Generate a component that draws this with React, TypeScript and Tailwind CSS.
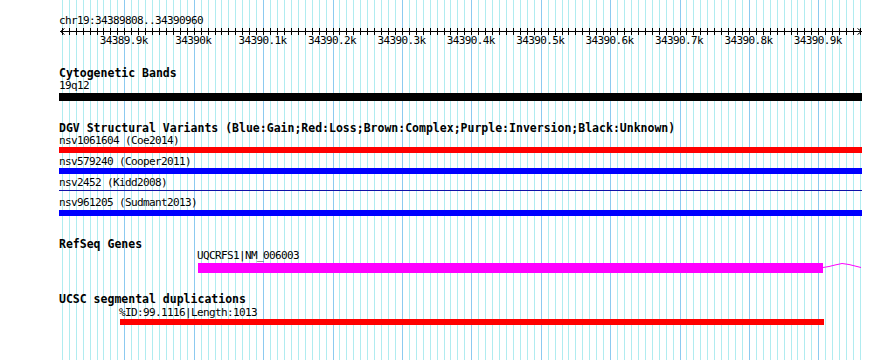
import React from "react";

const MAJOR0 = 124.3;
const MINOR = 6.94;

function gridXs() {
  const out: { x: number; major: boolean }[] = [];
  for (let k = -9; k <= 106; k++) {
    const x = Math.round(MAJOR0 + k * MINOR);
    out.push({ x, major: k % 10 === 0 });
  }
  return out;
}

const labels = [
  "34389.9k",
  "34390k",
  "34390.1k",
  "34390.2k",
  "34390.3k",
  "34390.4k",
  "34390.5k",
  "34390.6k",
  "34390.7k",
  "34390.8k",
  "34390.9k",
];

const mono = "font-['DejaVu_Sans_Mono','Liberation_Mono',monospace]";

function Grid() {
  const xs = gridXs();
  return (
    <svg
      className="absolute left-0 top-0"
      width={890}
      height={360}
      shapeRendering="crispEdges"
    >
      {xs.map((g, i) => (
        <rect
          key={i}
          x={g.x}
          y={0}
          width={1}
          height={360}
          fill={g.major ? "#8ccaf0" : "#b0ecf0"}
        />
      ))}
    </svg>
  );
}

function Ruler() {
  const xs = gridXs();
  const off = 59;
  return (
    <svg width={805} height={18} className="mt-[2px] block overflow-visible">
      <g shapeRendering="crispEdges" fill="#000">
        <rect x={60 - off} y={3} width={862 - 60} height={1} />
        {xs.map((g, i) => (
          <rect key={i} x={g.x - off} y={0} width={1} height={7} />
        ))}
      </g>
      <polyline
        points={`${64.5 - off},0.5 ${60.5 - off},3.5 ${64.5 - off},6.5`}
        fill="none"
        stroke="#000"
        strokeWidth={1}
      />
      <polyline
        points={`${857.5 - off},0.5 ${861.5 - off},3.5 ${857.5 - off},6.5`}
        fill="none"
        stroke="#000"
        strokeWidth={1}
      />
      {labels.map((t, i) => (
        <text
          key={t}
          x={MAJOR0 + i * 69.4 - off - 0.5}
          y={15.6}
          textAnchor="middle"
          fontFamily="'DejaVu Sans Mono', 'Liberation Mono', monospace"
          fontSize={11}
          letterSpacing={-0.62}
          fill="#000"
        >
          {t}
        </text>
      ))}
    </svg>
  );
}

function Small({ children, className = "" }: { children: React.ReactNode; className?: string }) {
  return (
    <div
      className={`${mono} text-[11px] leading-[10px] tracking-[-0.62px] h-[10px] whitespace-nowrap text-black ${className}`}
    >
      {children}
    </div>
  );
}

function Title({ children, className = "" }: { children: React.ReactNode; className?: string }) {
  return (
    <div className={`${mono} font-bold text-[11.5px] leading-[10px] h-[10px] whitespace-nowrap text-black ${className}`}>
      {children}
    </div>
  );
}

export default function App() {
  return (
    <div className="relative w-[890px] h-[360px] overflow-hidden bg-white">
      <Grid />
      <div className="relative flex flex-col pl-[59px]">
        <Small className="mt-[16px]">chr19:34389808..34390960</Small>
        <Ruler />

        <Title className="mt-[22px]">Cytogenetic Bands</Title>
        <Small className="mt-[3px]">19q12</Small>
        <div className="mt-[2px] h-[8px] w-[803px] bg-black" />

        <Title className="mt-[22px]">
          DGV Structural Variants (Blue:Gain;Red:Loss;Brown:Complex;Purple:Inversion;Black:Unknown)
        </Title>
        <Small className="mt-[3px]">nsv1061604 (Coe2014)</Small>
        <div className="mt-[1px] h-[6px] w-[803px] bg-[#ff0000]" />
        <Small className="mt-[4px]">nsv579240 (Cooper2011)</Small>
        <div className="mt-[1px] h-[6px] w-[803px] bg-[#0000ff]" />
        <Small className="mt-[4px]">nsv2452 (Kidd2008)</Small>
        <div className="mt-[2px] h-[1px] w-[803px] bg-[#1010a8]" />
        <Small className="mt-[7px]">nsv961205 (Sudmant2013)</Small>
        <div className="mt-[2px] h-[6px] w-[803px] bg-[#0000ff]" />

        <Title className="mt-[23px]">RefSeq Genes</Title>
        <Small className="relative z-10 mt-[2px] ml-[138px]">UQCRFS1|NM_006003</Small>
        <div className="mt-[2px] ml-[139px] flex h-[10px]">
          <div className="h-[10px] w-[625px] bg-[#ff00ff]" />
          <svg width={39} height={10} className="block">
            <polyline
              points="0,4.5 6,3.5 12,2 19,0.5 26,1.5 32,3 38,4.5"
              fill="none"
              stroke="#ff00ff"
              strokeWidth={1}
            />
          </svg>
        </div>

        <Title className="mt-[21px]">UCSC segmental duplications</Title>
        <Small className="mt-[4px] ml-[60px]">%ID:99.1116|Length:1013</Small>
        <div className="mt-[1px] ml-[61px] h-[6px] w-[704px] bg-[#ff0000]" />
      </div>
    </div>
  );
}
